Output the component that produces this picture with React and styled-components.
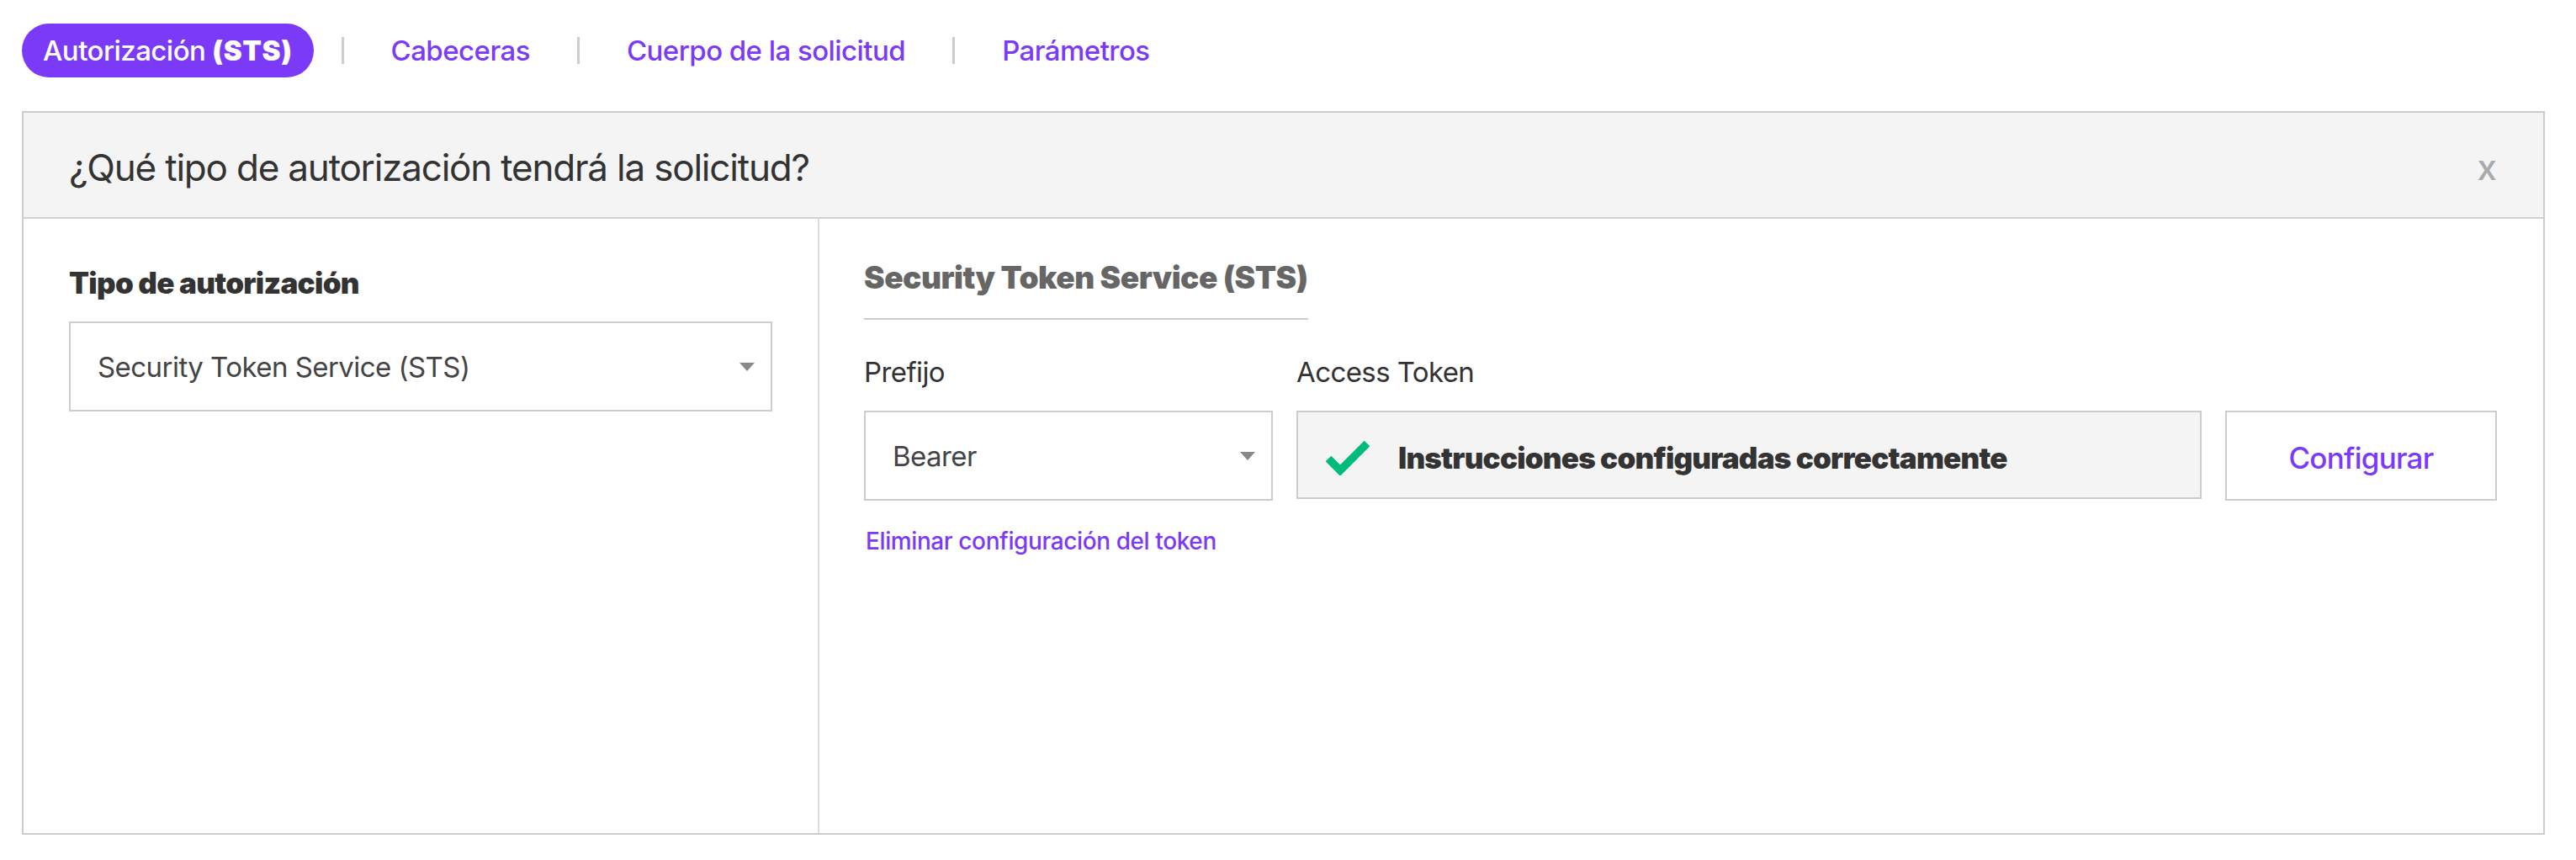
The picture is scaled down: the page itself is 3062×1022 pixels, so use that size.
import React from "react";
import styled, { createGlobalStyle } from "styled-components";

const Global = createGlobalStyle`
  html, body { margin: 0; padding: 0; background: #fff; }
  body { font-family: Inter, "Liberation Sans", sans-serif; color: #333; }
  * { box-sizing: border-box; }
`;
const PURPLE = "#7b3af7";
const Page = styled.div`
  width: 3062px; height: 1022px; padding: 28px 37px 30px 26px;
  display: flex; flex-direction: column; gap: 40px;
`;
const Tabs = styled.nav`display: flex; align-items: center; height: 64px;`;
const Tab = styled.a`
  height: 64px; display: flex; align-items: center; font-size: 33px; font-weight: 500;
  letter-spacing: -0.55px; white-space: nowrap; border-radius: 32px;
  padding: 0 25px; color: ${p => (p.$active ? "#fff" : PURPLE)};
  background: ${p => (p.$active ? PURPLE : "transparent")};
  b { font-weight: 900; margin-left: 8px; letter-spacing: 0.6px; }
`;
const TabSep = styled.span`
  width: 3px; height: 32px; background: #ccc; margin: 0 31px;
  &:first-of-type { margin-left: 33px; }
`;
const Panel = styled.section`
  flex: 1; display: flex; flex-direction: column; border: 2px solid #ccc; background: #fff;
`;
const Header = styled.header`
  height: 126px; flex: none; background: #f4f4f4; border-bottom: 2px solid #d2d2d2;
  display: flex; align-items: center; justify-content: space-between; padding: 5px 55px 0 54px;
`;
const Title = styled.h2`margin: 0; font-size: 44px; font-weight: 400; letter-spacing: -1.2px; color: #333;`;
const Close = styled.span`font-size: 42px; font-weight: 500; color: #aaa;`;
const Body = styled.div`flex: 1; display: grid; grid-template-columns: 946px 1fr;`;
const Left = styled.div`
  border-right: 2px solid #ddd; padding: 58px 54px 0 54px; display: flex; flex-direction: column;
`;
const StrongLabel = styled.div`font-size: 35px; font-weight: 900; line-height: 36px; letter-spacing: -0.7px; color: #333; margin-bottom: 28px;`;
const Select = styled.div`
  height: 107px; border: 2px solid #ccc; background: #fff; display: flex; align-items: center;
  justify-content: space-between; padding: 0 19px 0 ${p => p.$inset || 32}px; font-size: 33px; color: #444; letter-spacing: -0.55px;
`;
const Caret = styled.span`width: 0; height: 0; border-left: 9px solid transparent; border-right: 9px solid transparent; border-top: 10px solid #888;`;
const Right = styled.div`padding: 47px 53px 0 53px; display: flex; flex-direction: column;`;
const SectionTitle = styled.h3`
  margin: 0; align-self: flex-start; font-size: 37px; font-weight: 900; line-height: 46px; letter-spacing: -0.5px; color: #666;
  padding-bottom: 25px; border-bottom: 2px solid #ccc;
`;
const Fields = styled.div`display: grid; grid-template-columns: 486px 1076px 323px; column-gap: 28px; margin-top: 42px;`;
const FieldLabel = styled.div`font-size: 33px; line-height: 40px; letter-spacing: -0.6px; color: #333; height: 66px;`;
const TokenBox = styled.div`
  height: 105px; border: 2px solid #ccc; background: #f4f4f4; display: flex; align-items: center;
  padding: 6px 0 0 32px; gap: 33px; font-size: 35px; font-weight: 900; letter-spacing: -0.8px; color: #333;
`;
const ConfigButton = styled.button`
  width: 100%; height: 107px; border: 2px solid #ccc; background: #fff; color: ${PURPLE}; padding: 4px 0 0;
  font: 500 35px Inter, sans-serif; letter-spacing: -0.75px;
`;
const DeleteLink = styled.a`display: block; margin: 31px 0 0 2px; color: ${PURPLE}; font-size: 28px; line-height: 34px; font-weight: 500; letter-spacing: -0.4px;`;

export default function App() {
  return (
    <Page>
      <Global />
      <Tabs>
        <Tab $active>Autorización<b>(STS)</b></Tab>
        <TabSep />
        <Tab>Cabeceras</Tab>
        <TabSep />
        <Tab>Cuerpo de la solicitud</Tab>
        <TabSep />
        <Tab>Parámetros</Tab>
      </Tabs>
      <Panel>
        <Header>
          <Title>¿Qué tipo de autorización tendrá la solicitud?</Title>
          <Close>x</Close>
        </Header>
        <Body>
          <Left>
            <StrongLabel>Tipo de autorización</StrongLabel>
            <Select>Security Token Service (STS)<Caret /></Select>
          </Left>
          <Right>
            <SectionTitle>Security Token Service (STS)</SectionTitle>
            <Fields>
              <div>
                <FieldLabel>Prefijo</FieldLabel>
                <Select>Bearer<Caret /></Select>
                <DeleteLink>Eliminar configuración del token</DeleteLink>
              </div>
              <div>
                <FieldLabel>Access Token</FieldLabel>
                <TokenBox>
                  <svg width="54" height="42" viewBox="0 0 54 42" aria-hidden="true">
                    <path d="M4 22 L18 36 L50 4" fill="none" stroke="#00bb7e" strokeWidth="9.5" />
                  </svg>
                  Instrucciones configuradas correctamente
                </TokenBox>
              </div>
              <div>
                <FieldLabel />
                <ConfigButton>Configurar</ConfigButton>
              </div>
            </Fields>
          </Right>
        </Body>
      </Panel>
    </Page>
  );
}
